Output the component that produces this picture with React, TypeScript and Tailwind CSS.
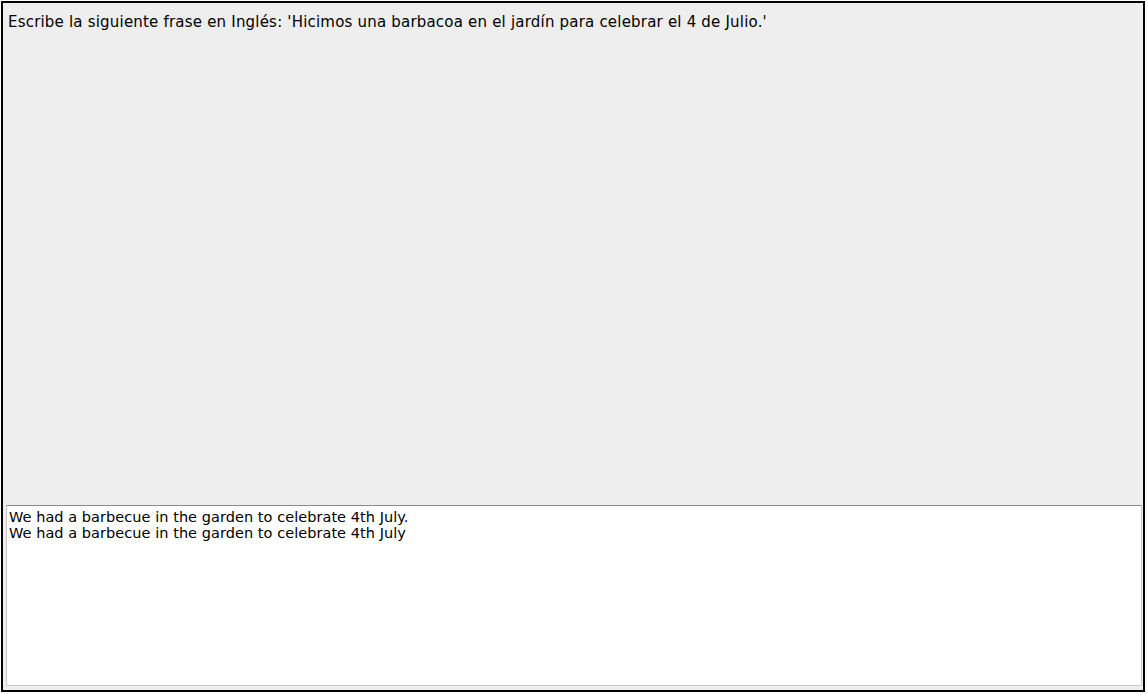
export default function App() {
  return (
    <div className="w-[1148px] h-[694px] bg-white pt-px pl-px">
      <div
        className="w-[1144px] h-[691px] border-2 border-black bg-[#eeeeee] flex flex-col text-black"
        style={{ fontFamily: '"DejaVu Sans", sans-serif' }}
      >
        <p className="px-[5px] pt-[10px] text-[15px] tracking-[0.2px] leading-[18px] flex-1">
          Escribe la siguiente frase en Inglés: 'Hicimos una barbacoa en el jardín para celebrar el 4 de Julio.'
        </p>
        <div className="ml-[3px] mr-px mb-[4px] h-[181px] bg-white border border-[#c8c8c8] border-t-[#8a8a8a] px-[2px] pt-[3px] text-[14.5px] tracking-[0.05px] leading-[16px]">
          <div>We had a barbecue in the garden to celebrate 4th July.</div>
          <div>We had a barbecue in the garden to celebrate 4th July</div>
        </div>
      </div>
    </div>
  );
}
